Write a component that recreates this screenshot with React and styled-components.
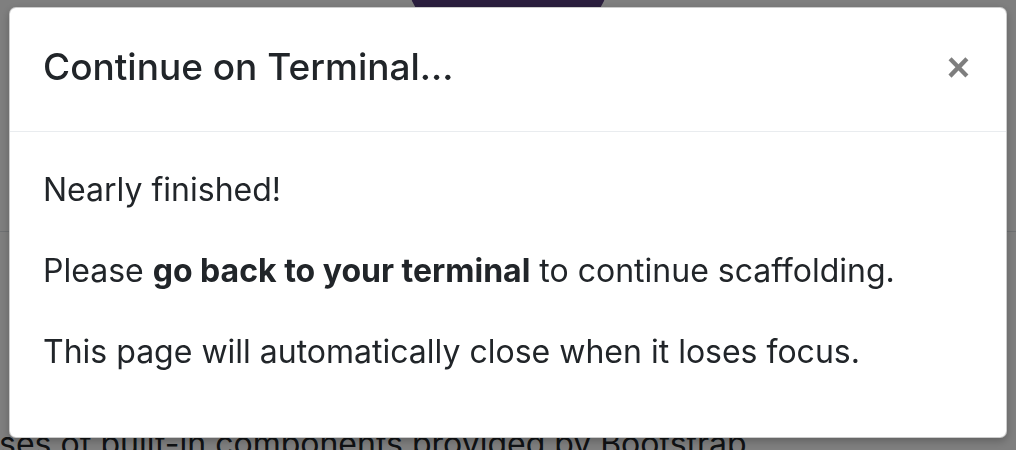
import React from "react";
import styled, { createGlobalStyle } from "styled-components";

const GlobalStyle = createGlobalStyle`
  html, body {
    margin: 0;
    padding: 0;
    background: #fff;
    overflow: hidden;
  }
  body {
    font-family: Inter, "Noto Sans", "Liberation Sans", sans-serif;
    color: #212529;
  }
`;

const Page = styled.div`
  height: 450px;
  overflow: hidden;
  display: flex;
  flex-direction: column;
`;

const Brand = styled.div`
  width: 196px;
  height: 60px;
  margin: -40px auto 0;
  background: #563d7c;
  border-radius: 0 0 30px 30px;
  flex: none;
`;

const Masthead = styled.div`
  height: 211px;
  border-bottom: 1px solid #dee2e6;
  flex: none;
`;

const Lead = styled.p`
  margin: auto 0 0 -1px;
  font-size: 32px;
  line-height: 1;
  white-space: nowrap;
  transform: translateY(10px);
`;

const Backdrop = styled.div`
  position: fixed;
  inset: 0;
  background: rgba(0, 0, 0, 0.5);
`;

const Dialog = styled.div`
  position: fixed;
  top: 7px;
  left: 9px;
  width: 998px;
`;

const Content = styled.div`
  background: #fff;
  border: 1px solid rgba(0, 0, 0, 0.2);
  border-radius: 7px;
  box-shadow: 0 3px 9px rgba(0, 0, 0, 0.25);
  overflow: hidden;
`;

const Header = styled.div`
  display: flex;
  align-items: center;
  justify-content: space-between;
  box-sizing: border-box;
  height: 124px;
  padding: 0 36px 5px 33px;
  border-bottom: 1px solid #e9ecef;
`;

const Title = styled.h5`
  margin: 0;
  font-size: 37px;
  font-weight: 500;
  line-height: 1.2;
`;

const Close = styled.button`
  border: 0;
  background: transparent;
  padding: 0;
  font-family: "Liberation Sans", Arial, sans-serif;
  font-size: 40px;
  font-weight: 700;
  line-height: 1;
  color: #000;
  opacity: 0.5;
  cursor: pointer;
`;

const Body = styled.div`
  padding: 38px 33px 24px;
`;

const Para = styled.p`
  margin: 0 0 41px;
  font-size: 32px;
  line-height: 40px;
`;

const App = () => {
  return (
    <>
      <GlobalStyle />
      <Page>
        <Brand />
        <Masthead />
        <Lead>ses of built-in components provided by Bootstrap.</Lead>
      </Page>
      <Backdrop />
      <Dialog>
        <Content>
          <Header>
            <Title>Continue on Terminal...</Title>
            <Close aria-label="Close">×</Close>
          </Header>
          <Body>
            <Para>Nearly finished!</Para>
            <Para>
              Please <strong>go back to your terminal</strong> to continue
              scaffolding.
            </Para>
            <Para>This page will automatically close when it loses focus.</Para>
          </Body>
        </Content>
      </Dialog>
    </>
  );
};

export default App;
